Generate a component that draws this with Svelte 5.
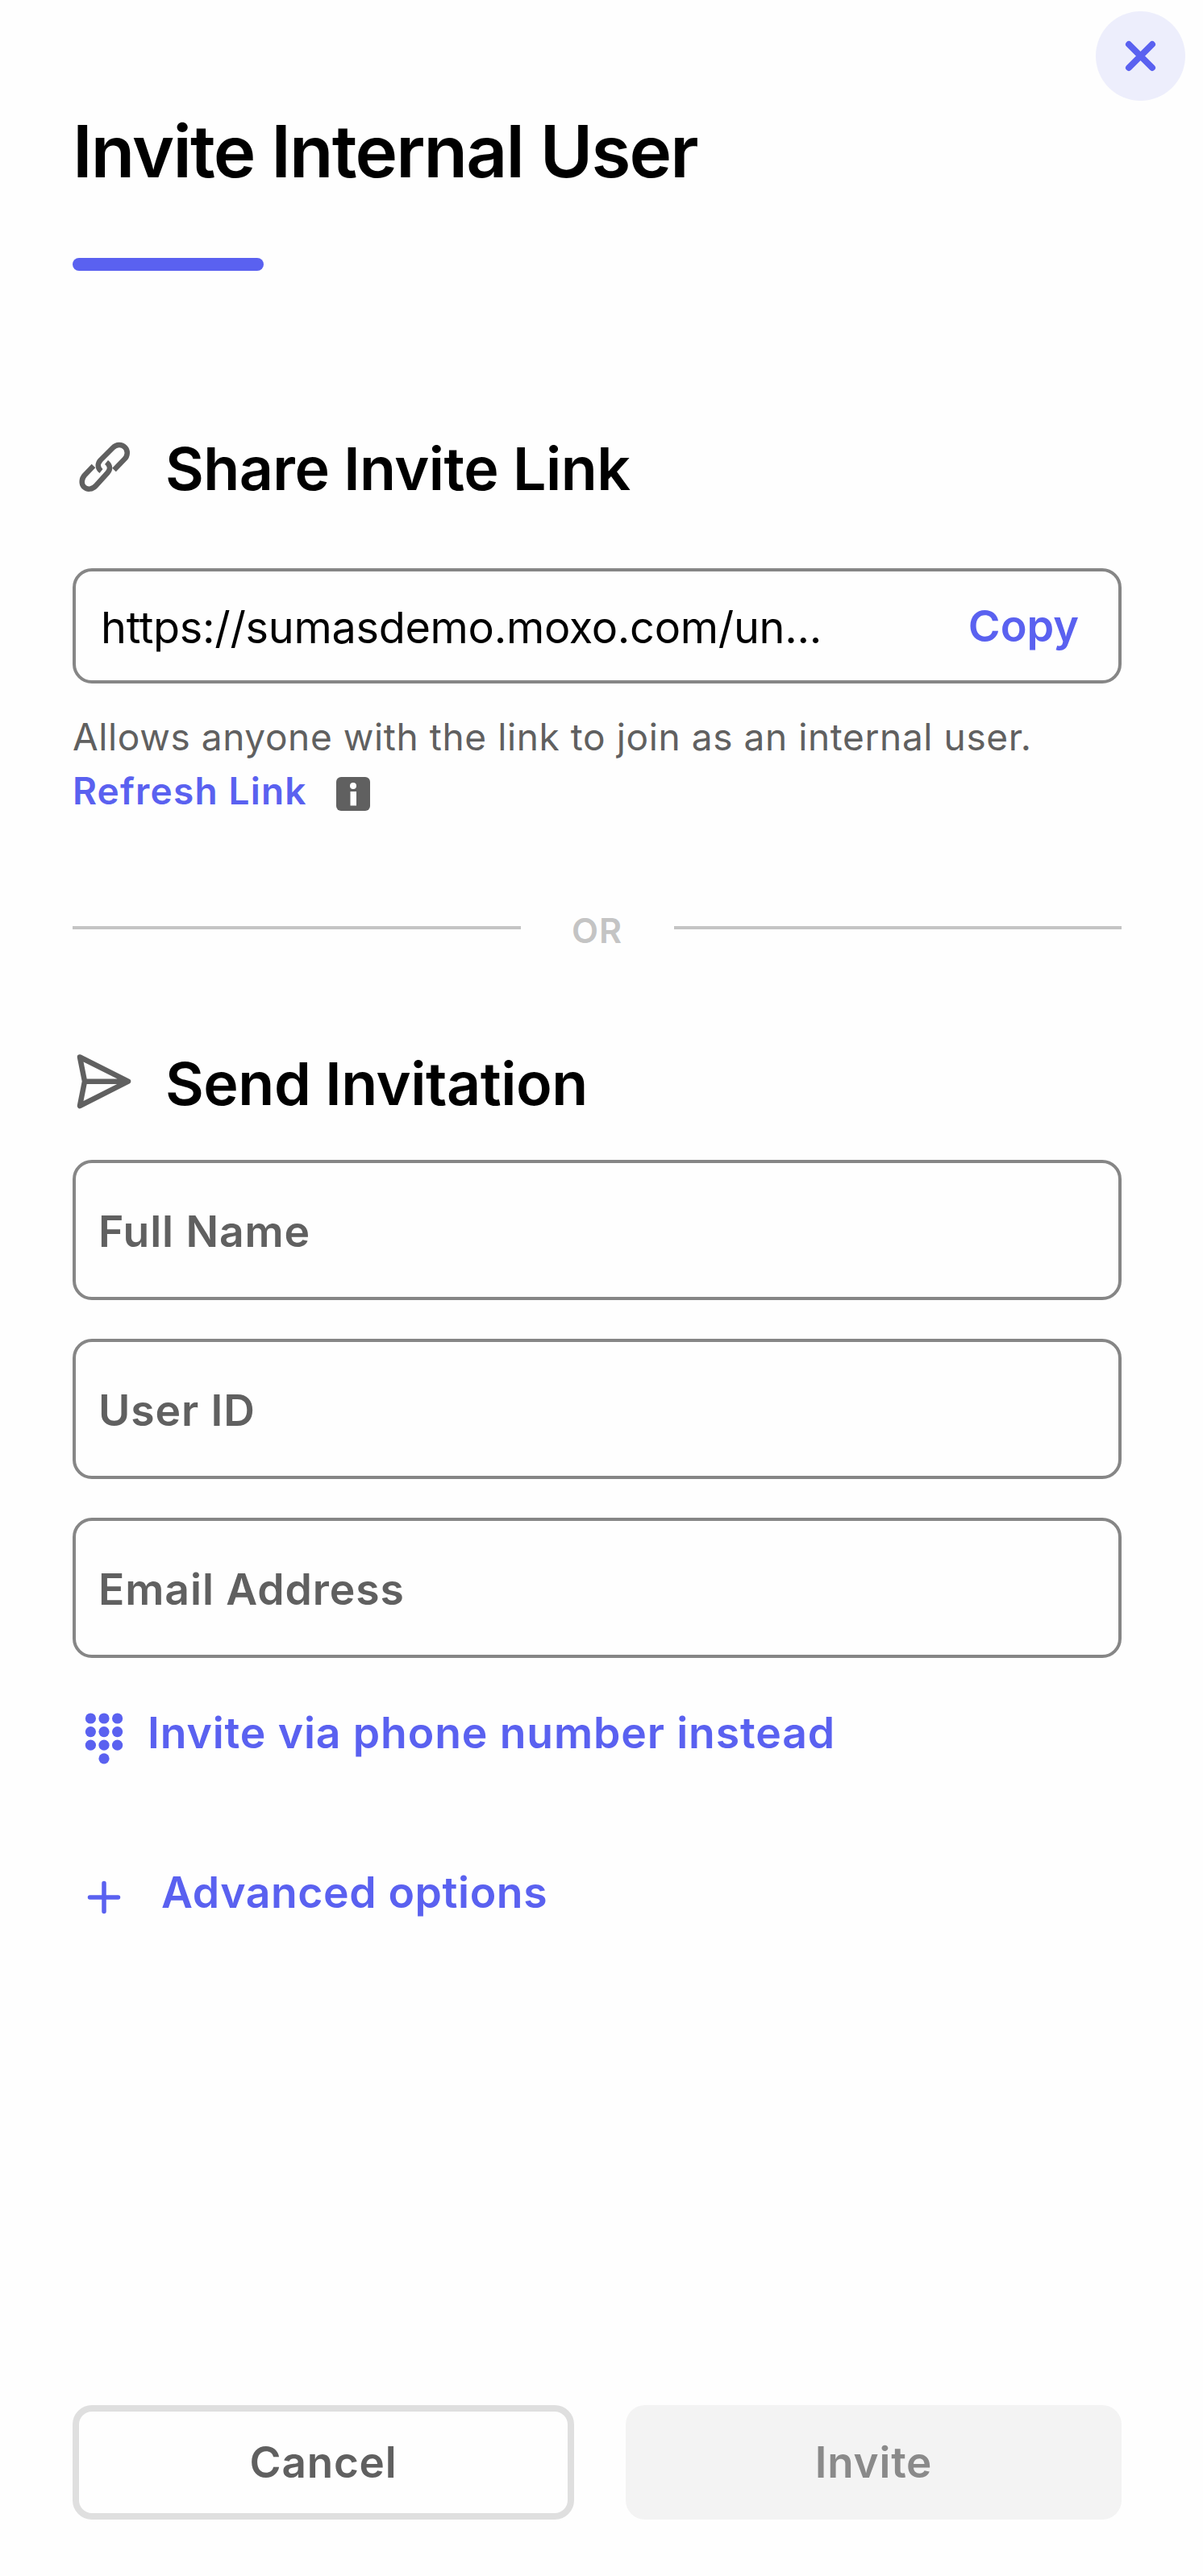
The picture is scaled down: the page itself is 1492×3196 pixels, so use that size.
<script>
    const inviteLink = 'https://sumasdemo.moxo.com/un...';

    let fields = [
        { id: 'name', label: 'Full Name', value: '' },
        { id: 'uid', label: 'User ID', value: '' },
        { id: 'email', label: 'Email Address', value: '' }
    ];

    // keypad dots: 3x3 grid plus the bottom middle one
    const dots = [0, 1, 2, 3, 4, 5, 6, 7, 8, 10];
</script>

<div class="panel">
    <button class="close" aria-label="Close">
        <svg width="111" height="111" viewBox="0 0 111 111">
            <path d="M41 41 L70 70 M70 41 L41 70" />
        </svg>
    </button>

    <h1>Invite Internal User</h1>
    <div class="accent"></div>

    <section class="share">
        <h2>
            <svg class="heading-icon" viewBox="10 12 80 80">
                <path d="M45.5 54.5 C41 51 40.500 45.500 44.500 41 L60 25.500 C64.500 21 71 21 75 25 C79 29 78.500 35.500 74.500 39.500 L61.500 53" />
                <path d="M52 43.500 C56.500 47 57.500 52 53.500 56.500 L39 72.500 C34.500 77.500 28 78 24 74 C20.500 70 21 64 25 59.500 L36 48" />
            </svg>
            <span class="share-title">Share Invite Link</span>
        </h2>
        <div class="link-box">
            <span class="url">{inviteLink}</span>
            <button class="copy">Copy</button>
        </div>
        <p class="helper">Allows anyone with the link to join as an internal user.</p>
        <div class="refresh-row">
            <button class="refresh">Refresh Link</button>
            <svg width="42" height="42" viewBox="0 0 42 42">
                <rect width="42" height="42" rx="6" fill="#606060" />
                <circle cx="21" cy="11" r="4" fill="#fff" />
                <rect x="17.500" y="18" width="7.500" height="17.500" fill="#fff" />
            </svg>
        </div>
    </section>

    <div class="divider"><span>OR</span></div>

    <section>
        <h2>
            <svg class="heading-icon" viewBox="10 15 80 80">
                <path d="M19 21.500 L79 51.700 L19 82 L25 51.700 Z M25 51.700 H77" />
            </svg>
            <span class="send-title">Send Invitation</span>
        </h2>
        <div class="fields">
            {#each fields as field (field.id)}
                <input type="text" placeholder={field.label} bind:value={field.value} />
            {/each}
        </div>
        <button class="action phone">
            <svg width="52" height="70" viewBox="0 0 52 70">
                {#each dots as d}
                    <circle cx={9.4 + (d % 3) * 16.6} cy={10 + Math.floor(d / 3) * 16.6} r="6.6" />
                {/each}
            </svg>
            <span>Invite via phone number instead</span>
        </button>
        <button class="action advanced">
            <svg width="52" height="52" viewBox="0 0 52 52">
                <path d="M8.500 26 H43.500 M26 8.500 V43.500" />
            </svg>
            <span>Advanced options</span>
        </button>
    </section>

    <footer>
        <button class="cancel">Cancel</button>
        <button class="invite" disabled>Invite</button>
    </footer>
</div>

<style>
    .panel {
        position: relative;
        box-sizing: border-box;
        width: 1492px;
        height: 3196px;
        padding: 134px 101px 70px 90px;
        display: flex;
        flex-direction: column;
        background: #fefefe;
        color: #000;
        font-family: Inter, "Liberation Sans", sans-serif;
    }
    button {
        padding: 0;
        border: none;
        background: none;
        font-family: inherit;
        color: #5a61f0;
        cursor: pointer;
    }
    svg {
        flex: none;
        display: block;
    }
    .close {
        position: absolute;
        top: 14px;
        right: 22px;
        width: 111px;
        height: 111px;
        border-radius: 50%;
        background: #edeefc;
    }
    .close path {
        stroke: #5a61f0;
        stroke-width: 8;
        stroke-linecap: round;
    }
    h1 {
        margin: 0;
        font-size: 89px;
        line-height: 108px;
        font-weight: 600;
        letter-spacing: -1.8px;
        white-space: nowrap;
    }
    .accent {
        width: 237px;
        height: 16px;
        margin-top: 78px;
        border-radius: 8px;
        background: #5a61f0;
    }
    .share {
        margin-top: 201px;
    }
    h2 {
        margin: 0;
        display: flex;
        align-items: center;
        gap: 35px;
        height: 90px;
        font-size: 73.5px;
        line-height: 90px;
        font-weight: 600;
        white-space: nowrap;
    }
    .share-title {
        letter-spacing: -0.55px;
    }
    .send-title {
        letter-spacing: -0.45px;
    }
    .heading-icon {
        width: 80px;
        height: 80px;
        fill: none;
        stroke: #606060;
        stroke-width: 6.5;
        stroke-linejoin: round;
        stroke-linecap: butt;
    }
    .link-box {
        box-sizing: border-box;
        height: 143px;
        margin-top: 78px;
        padding: 0 49px 0 31px;
        border: 4px solid #868686;
        border-radius: 24px;
        display: flex;
        align-items: center;
        justify-content: space-between;
    }
    .url {
        padding-top: 3px;
        font-size: 54px;
        letter-spacing: -0.3px;
    }
    .copy {
        font-size: 54px;
        font-weight: 600;
    }
    .helper {
        margin: 33px 0 0;
        font-size: 46px;
        line-height: 67px;
        letter-spacing: 0.6px;
        color: #606060;
        white-space: nowrap;
    }
    .refresh-row {
        display: flex;
        align-items: center;
        gap: 36px;
        height: 67px;
    }
    .refresh-row svg {
        margin-top: 6px;
    }
    .refresh {
        font-size: 46px;
        line-height: 67px;
        font-weight: 600;
        letter-spacing: 1.2px;
    }
    .divider {
        display: flex;
        align-items: center;
        height: 60px;
        margin: 106px 0 119px;
        color: #c4c4c4;
        font-size: 43px;
        font-weight: 600;
        letter-spacing: 1px;
    }
    .divider::before,
    .divider::after {
        content: '';
        flex: 1;
        height: 4px;
        background: #c4c4c4;
    }
    .divider span {
        width: 190px;
        padding-top: 5px;
        text-align: center;
    }
    .fields {
        display: flex;
        flex-direction: column;
        gap: 48px;
        margin-top: 49px;
    }
    input {
        box-sizing: border-box;
        width: 100%;
        height: 174px;
        padding: 2px 28px 0;
        border: 4px solid #868686;
        border-radius: 24px;
        background: transparent;
        font-family: inherit;
        font-size: 53.5px;
        font-weight: 600;
        letter-spacing: 0.9px;
    }
    input::placeholder {
        color: #606060;
        opacity: 1;
    }
    .action {
        display: flex;
        align-items: center;
        height: 64px;
        font-size: 53.5px;
        line-height: 64px;
        font-weight: 600;
        white-space: nowrap;
        fill: #5a61f0;
    }
    .phone {
        margin-top: 61px;
        padding-left: 13px;
        gap: 28px;
        letter-spacing: 0.88px;
    }
    .phone svg {
        margin-top: 14px;
    }
    .advanced {
        margin-top: 134px;
        padding-left: 13px;
        gap: 45px;
        letter-spacing: 0.6px;
    }
    .advanced svg {
        margin-top: 12px;
    }
    .advanced path {
        stroke: #5a61f0;
        stroke-width: 5.5;
        stroke-linecap: round;
    }
    footer {
        display: flex;
        gap: 64px;
        margin-top: auto;
    }
    footer button {
        box-sizing: border-box;
        height: 142px;
        border-radius: 24px;
        font-size: 53px;
        font-weight: 600;
        letter-spacing: 0.8px;
    }
    .cancel {
        width: 622px;
        border: 8px solid #dfdfdf;
        color: #606060;
    }
    .invite {
        flex: 1;
        background: #f3f3f3;
        color: #8a8a8a;
    }
</style>
